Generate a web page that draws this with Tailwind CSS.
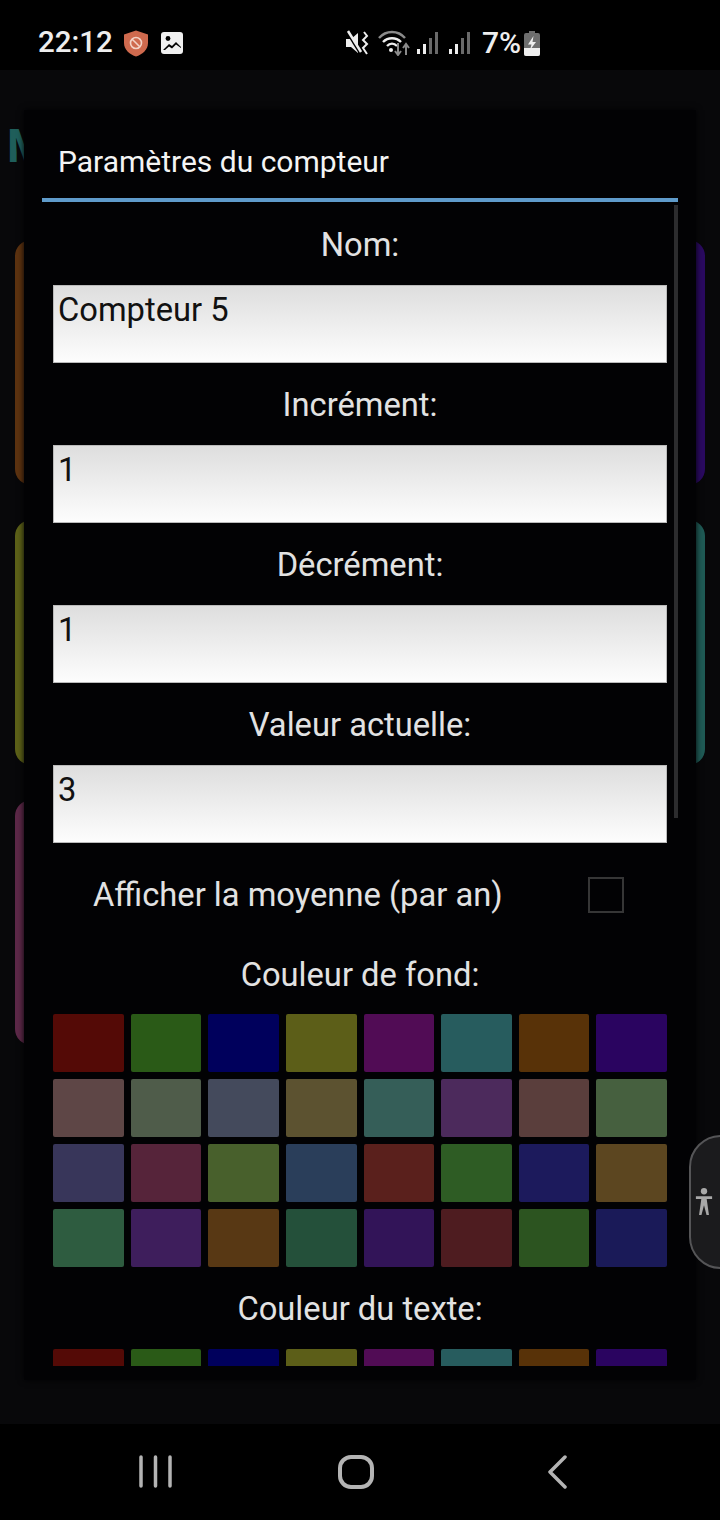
<!DOCTYPE html>
<html lang="fr">
  <head>
    <meta charset="UTF-8" />
    <meta name="viewport" content="width=device-width, initial-scale=1.0" />
    <title>Paramètres du compteur</title>
    <script src="https://cdn.jsdelivr.net/npm/@tailwindcss/browser@4"></script>
  </head>
  <body class="bg-black">
    <div class="relative flex flex-col w-[720px] h-[1520px] overflow-hidden bg-black font-['Roboto',sans-serif]">
      <!-- status bar -->
      <header class="flex items-center h-[70px] shrink-0 pt-[16px] pl-[38px] bg-black text-[#eeeeee]">
        <span class="text-[29.5px] leading-none font-medium w-[85px]">22:12</span>
        <svg class="w-[26px] h-[27px]" viewBox="0 0 26 27">
          <path d="M13 0.5 L25 4.5 V13 C25 20 19 24.5 13 26.5 C7 24.5 1 20 1 13 V4.5 Z" fill="#cf6a4e" />
          <circle cx="13" cy="13" r="5.5" fill="none" stroke="#f3d3c6" stroke-width="1.6" />
          <path d="M9.2 9.2 L16.8 16.8" stroke="#f3d3c6" stroke-width="1.6" />
        </svg>
        <svg class="w-[22px] h-[22px] ml-[12px]" viewBox="0 0 22 22">
          <rect width="22" height="22" rx="3" fill="#f0f0f0" />
          <circle cx="7" cy="6.5" r="2.4" fill="#000" />
          <path d="M2 18 L8 12 L11 14 L15 10 L20 15 V16 L15 12.5 L11 16.5 L8 14.5 L4 18 Z" fill="#000" />
        </svg>
        <svg class="w-[24px] h-[26px] ml-[162px]" viewBox="0 0 24 26">
          <path d="M1 9 H6 L13 3 V23 L6 17 H1 Z" fill="#eeeeee" />
          <path d="M2 2 L15 23" stroke="#000" stroke-width="2.5" />
          <path d="M3 1 L16 22" stroke="#eeeeee" stroke-width="2.5" />
          <path d="M19 2 L22 6 L18 10 L22 14 L18 18 L22 24" fill="none" stroke="#eeeeee" stroke-width="2" />
        </svg>
        <svg class="w-[32px] h-[26px] ml-[9px]" viewBox="0 0 32 26">
          <path d="M1 8 C8 0 20 0 27 8" fill="none" stroke="#8a8a8a" stroke-width="2.4" />
          <path d="M5 12 C10 7 18 7 23 12" fill="none" stroke="#eeeeee" stroke-width="2.4" />
          <path d="M9 16 C12 13 16 13 19 16" fill="none" stroke="#eeeeee" stroke-width="2.4" />
          <circle cx="13" cy="20" r="2" fill="#eeeeee" />
          <path d="M20 13 V24 M17 21 L20 25 L23 21" fill="none" stroke="#8a8a8a" stroke-width="2" />
          <path d="M28 25 V15 M25 18 L28 14 L31 18" fill="none" stroke="#8a8a8a" stroke-width="2" />
        </svg>
        <svg class="w-[23px] h-[24px] ml-[6px]" viewBox="0 0 23 24">
          <rect x="1" y="18" width="3" height="5" fill="#eeeeee" />
          <rect x="7" y="13" width="3" height="10" fill="#eeeeee" />
          <rect x="13" y="7" width="3" height="16" fill="#6a6a6a" />
          <rect x="19" y="1" width="3" height="22" fill="#6a6a6a" />
        </svg>
        <svg class="w-[23px] h-[24px] ml-[9px]" viewBox="0 0 23 24">
          <rect x="1" y="18" width="3" height="5" fill="#eeeeee" />
          <rect x="7" y="13" width="3" height="10" fill="#eeeeee" />
          <rect x="13" y="7" width="3" height="16" fill="#6a6a6a" />
          <rect x="19" y="1" width="3" height="22" fill="#6a6a6a" />
        </svg>
        <span class="text-[30px] leading-none font-medium ml-[11px] w-[42px]">7%</span>
        <svg class="w-[16px] h-[25px]" viewBox="0 0 16 25">
          <path d="M5 0 H11 V2 H14 Q16 2 16 4 V23 Q16 25 14 25 H2 Q0 25 0 23 V4 Q0 2 2 2 H5 Z" fill="#6e6e6e" />
          <path d="M0 17 H16 V23 Q16 25 14 25 H2 Q0 25 0 23 Z" fill="#eeeeee" />
          <path d="M9.5 5 L4 13.5 H7.5 L6 19 L12 11 H8.5 Z" fill="#eeeeee" />
        </svg>
      </header>

      <!-- page behind the dialog -->
      <main class="relative flex-1 bg-[#08080a] px-[15px] pt-[53px]">
        <h1 class="h-[117px] -ml-[8px] text-[46px] leading-[46px] font-bold text-[#1f5e5a]">M</h1>
        <div class="grid grid-cols-2 gap-x-[20px] gap-y-[35px]">
          <div class="h-[245px] rounded-[16px] bg-[#5c3210]"></div>
          <div class="h-[245px] rounded-[16px] bg-[#2a0a60]"></div>
          <div class="h-[245px] rounded-[16px] bg-[#5c6018]"></div>
          <div class="h-[245px] rounded-[16px] bg-[#1f5a55]"></div>
          <div class="h-[245px] rounded-[16px] bg-[#5c2848]"></div>
        </div>

        <!-- dialog -->
        <section class="absolute left-[24px] top-[40px] w-[672px] h-[1270px] bg-[#020204] shadow-[0_0_6px_#020204] px-[18px]">
          <h2 class="flex items-center h-[92px] pt-[16px] pl-[16px] border-b-4 border-[#5f9bcb] text-[30px] leading-none font-normal text-[#f4f4f4]">Paramètres du compteur</h2>
          <div class="relative h-[1164px] px-[11px] overflow-hidden text-[#e2e2e2] text-[32.7px]">
            <div class="absolute right-0 top-[3px] w-[4px] h-[613px] bg-[#2c2c2e]"></div>

            <label class="flex items-center justify-center h-[82px] pt-[4px] mt-px">Nom:</label>
            <input class="block w-full h-[78px] pl-[4px] pb-[28px] border border-[#bbbbbb] bg-linear-to-b from-[#dedede] to-[#fdfdfd] text-[#111111]" value="Compteur 5" />
            <label class="flex items-center justify-center h-[82px] pt-[4px]">Incrément:</label>
            <input class="block w-full h-[78px] pl-[4px] pb-[28px] border border-[#bbbbbb] bg-linear-to-b from-[#dedede] to-[#fdfdfd] text-[#111111]" value="1" />
            <label class="flex items-center justify-center h-[82px] pt-[4px]">Décrément:</label>
            <input class="block w-full h-[78px] pl-[4px] pb-[28px] border border-[#bbbbbb] bg-linear-to-b from-[#dedede] to-[#fdfdfd] text-[#111111]" value="1" />
            <label class="flex items-center justify-center h-[82px] pt-[4px]">Valeur actuelle:</label>
            <input class="block w-full h-[78px] pl-[4px] pb-[28px] border border-[#bbbbbb] bg-linear-to-b from-[#dedede] to-[#fdfdfd] text-[#111111]" value="3" />

            <div class="flex items-center justify-between h-[104px] pl-[40px] pr-[43px]">
              <span class="pt-[2px]">Afficher la moyenne (par an)</span>
              <input type="checkbox" class="appearance-none w-[36px] h-[36px] border-2 border-[#363636] bg-transparent" />
            </div>

            <label class="flex items-center justify-center h-[56px] pt-[2px] mb-[11px]">Couleur de fond:</label>
            <div class="grid grid-cols-8 auto-rows-[58px] gap-[7px]">
              <div class="rounded-[2px] bg-[#540a06]"></div>
              <div class="rounded-[2px] bg-[#2a5a17]"></div>
              <div class="rounded-[2px] bg-[#00005c]"></div>
              <div class="rounded-[2px] bg-[#5c5e18]"></div>
              <div class="rounded-[2px] bg-[#510c55]"></div>
              <div class="rounded-[2px] bg-[#275c5e]"></div>
              <div class="rounded-[2px] bg-[#583208]"></div>
              <div class="rounded-[2px] bg-[#2a0460]"></div>

              <div class="rounded-[2px] bg-[#5e4646]"></div>
              <div class="rounded-[2px] bg-[#4f5c4a]"></div>
              <div class="rounded-[2px] bg-[#444a5c]"></div>
              <div class="rounded-[2px] bg-[#5c5230]"></div>
              <div class="rounded-[2px] bg-[#355e58]"></div>
              <div class="rounded-[2px] bg-[#4c2a5c]"></div>
              <div class="rounded-[2px] bg-[#5a3e3c]"></div>
              <div class="rounded-[2px] bg-[#46603f]"></div>

              <div class="rounded-[2px] bg-[#38365a]"></div>
              <div class="rounded-[2px] bg-[#56243a]"></div>
              <div class="rounded-[2px] bg-[#48602c]"></div>
              <div class="rounded-[2px] bg-[#2a3e5a]"></div>
              <div class="rounded-[2px] bg-[#5a201c]"></div>
              <div class="rounded-[2px] bg-[#2e5c24]"></div>
              <div class="rounded-[2px] bg-[#1c1a5c]"></div>
              <div class="rounded-[2px] bg-[#5c4620]"></div>

              <div class="rounded-[2px] bg-[#2e5c40]"></div>
              <div class="rounded-[2px] bg-[#3e1e5c]"></div>
              <div class="rounded-[2px] bg-[#583814]"></div>
              <div class="rounded-[2px] bg-[#24503a]"></div>
              <div class="rounded-[2px] bg-[#321458]"></div>
              <div class="rounded-[2px] bg-[#4e1c20]"></div>
              <div class="rounded-[2px] bg-[#2c5420]"></div>
              <div class="rounded-[2px] bg-[#1a1a58]"></div>
            </div>

            <label class="flex items-center justify-center h-[82px] pt-[4px]">Couleur du texte:</label>
            <div class="grid grid-cols-8 auto-rows-[58px] gap-[7px]">
              <div class="rounded-[2px] bg-[#540a06]"></div>
              <div class="rounded-[2px] bg-[#2a5a17]"></div>
              <div class="rounded-[2px] bg-[#00005c]"></div>
              <div class="rounded-[2px] bg-[#5c5e18]"></div>
              <div class="rounded-[2px] bg-[#510c55]"></div>
              <div class="rounded-[2px] bg-[#275c5e]"></div>
              <div class="rounded-[2px] bg-[#583208]"></div>
              <div class="rounded-[2px] bg-[#2a0460]"></div>
            </div>
          </div>
        </section>
      </main>

      <!-- navigation bar -->
      <nav class="flex items-center h-[96px] shrink-0 pb-[1px] pl-[139px] bg-black">
        <svg class="w-[33px] h-[33px]" viewBox="0 0 33 33" fill="none" stroke="#b4b4b4" stroke-width="3.5" stroke-linecap="round">
          <path d="M2 2 V31 M16.5 2 V31 M31 2 V31" />
        </svg>
        <svg class="w-[36px] h-[34px] ml-[166px]" viewBox="0 0 36 34" fill="none" stroke="#b4b4b4" stroke-width="4">
          <rect x="2" y="2" width="32" height="30" rx="11" />
        </svg>
        <svg class="w-[20px] h-[34px] ml-[173px]" viewBox="0 0 20 34" fill="none" stroke="#b4b4b4" stroke-width="3.5" stroke-linecap="round" stroke-linejoin="round">
          <path d="M18 2 L3 17 L18 32" />
        </svg>
      </nav>

      <!-- accessibility shortcut, overlaps the page edge -->
      <button class="absolute left-[689px] top-[1135px] flex items-center w-[70px] h-[134px] pl-[4px] rounded-[32px] border-2 border-[#555557] bg-[#1b1b1d]">
        <svg class="w-[18px] h-[31px]" viewBox="0 0 20 32" fill="#a8a8a8">
          <circle cx="10" cy="3.5" r="3.5" />
          <path d="M1 9 H19 V12 H13 L15.5 30 H12.8 L10 19 L7.2 30 H4.5 L7 12 H1 Z" />
        </svg>
      </button>
    </div>
  </body>
</html>
